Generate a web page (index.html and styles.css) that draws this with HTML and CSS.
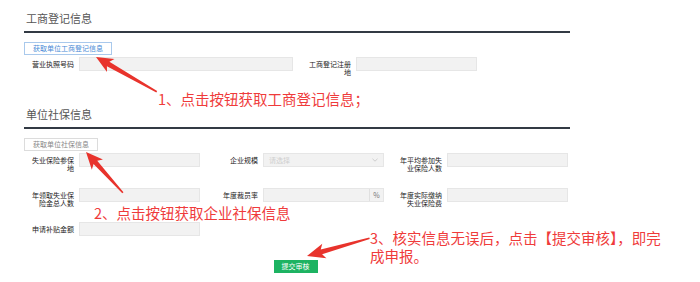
FILE: index.html
```html
<!DOCTYPE html>
<html lang="zh-CN">
<head>
    <meta charset="UTF-8">
    <meta name="viewport" content="width=device-width, initial-scale=1.0">
    <title>单位信息申报</title>
    <link rel="stylesheet" href="styles.css">
</head>
<body>

    <div class="page">
        <div class="section">
            <h2 class="section-title">工商登记信息</h2>
            <button class="fetch-btn fetch-btn-blue">获取单位工商登记信息</button>
            <div class="row-biz">
                <div class="field field-wide">
                    <label>营业执照号码</label>
                    <div class="input"></div>
                </div>
                <div class="field">
                    <label>工商登记注册地</label>
                    <div class="input"></div>
                </div>
            </div>
        </div>

        <div class="section section-social">
            <h2 class="section-title">单位社保信息</h2>
            <button class="fetch-btn">获取单位社保信息</button>
            <div class="form-grid">
                <div class="field">
                    <label>失业保险参保地</label>
                    <div class="input"></div>
                </div>
                <div class="field">
                    <label>企业规模</label>
                    <div class="input select">
                        <span class="placeholder">请选择</span>
                        <svg class="chevron" width="6" height="4" viewBox="0 0 6 4"><path d="M0.5 0.8 L3 3.2 L5.5 0.8" fill="none" stroke="#c4c4c4" stroke-width="0.8"/></svg>
                    </div>
                </div>
                <div class="field">
                    <label>年平均参加失业保险人数</label>
                    <div class="input"></div>
                </div>

                <div class="field">
                    <label>年领取失业保险金总人数</label>
                    <div class="input"></div>
                </div>
                <div class="field">
                    <label>年度裁员率</label>
                    <div class="input addon-input"><span class="addon">%</span></div>
                </div>
                <div class="field">
                    <label>年度实际缴纳失业保险费</label>
                    <div class="input"></div>
                </div>

                <div class="field">
                    <label>申请补贴金额</label>
                    <div class="input"></div>
                </div>
            </div>
        </div>

        <div class="submit-bar">
            <button class="submit-btn">提交审核</button>
        </div>
    </div>

    <!-- 标注 -->
    <p class="note note-1">1、点击按钮获取工商登记信息；</p>
    <p class="note note-2">2、点击按钮获取企业社保信息</p>
    <p class="note note-3">3、核实信息无误后，点击【提交审核】，即完成申报。</p>

    <svg class="arrows" width="700" height="282" viewBox="0 0 700 282">
        <g fill="#e8332c">
            <polygon transform="translate(96 57) rotate(29.8)" points="0,0 17,-7.5 14,-2.5 70,-0.8 70,0.8 14,2.5 17,7.5"/>
            <polygon transform="translate(86 152) rotate(47.9)" points="0,0 17,-7.5 14,-2.5 55,-0.8 55,0.8 14,2.5 17,7.5"/>
            <polygon transform="translate(307 256) rotate(-15.9)" points="0,0 18,-7.5 15,-2.5 65,-0.8 65,0.8 15,2.5 18,7.5"/>
        </g>
    </svg>

</body>
</html>
```

FILE: styles.css
```css
body {
    margin: 0;
    width: 700px;
    height: 282px;
    position: relative;
    overflow: hidden;
    background-color: #fff;
    font-family: "Noto Sans CJK SC", "Noto Sans", sans-serif;
}
.page {
    width: 546px;
    margin-left: 24px;
    padding-top: 10px;
}
.section-title {
    margin: 0;
    padding: 0 0 5px 2px;
    font-size: 11px;
    line-height: 16px;
    font-weight: normal;
    color: #555;
    border-bottom: 2px solid #323a44;
}
.section-social {
    margin-top: 30px;
}
.fetch-btn {
    display: block;
    margin-top: 9px;
    height: 13px;
    padding: 0 8px;
    font-family: inherit;
    font-size: 7px;
    line-height: 11px;
    color: #888;
    background-color: #fff;
    border: 1px solid #dcdcdc;
}
.fetch-btn-blue {
    color: #4a8bd6;
    border-color: #a9c9ec;
}
.row-biz {
    display: flex;
    gap: 13px;
    margin-top: 2px;
    padding-left: 5px;
}
.form-grid {
    display: grid;
    grid-template-columns: repeat(3, 171px);
    column-gap: 13px;
    row-gap: 15.5px;
    margin-top: 2px;
    padding-left: 5px;
}
.field {
    display: flex;
    align-items: flex-start;
    gap: 5px;
}
.field label {
    width: 45px;
    flex-shrink: 0;
    padding-top: 3px;
    font-size: 7px;
    line-height: 8px;
    text-align: right;
    color: #222;
}
.input {
    width: 121px;
    height: 14px;
    box-sizing: border-box;
    background-color: #f2f2f2;
    border: 1px solid #e6e6e6;
}
.field-wide .input {
    width: 214px;
}
.select {
    display: flex;
    align-items: center;
    justify-content: space-between;
    padding: 0 5px;
}
.placeholder {
    font-size: 7px;
    color: #cfcfcf;
}
.addon-input {
    display: flex;
    justify-content: flex-end;
}
.addon {
    width: 13px;
    border-left: 1px solid #e0e0e0;
    font-size: 7px;
    line-height: 12px;
    text-align: center;
    color: #777;
}
.submit-bar {
    display: flex;
    justify-content: center;
    margin-top: 24px;
    padding-right: 3px;
}
.submit-btn {
    height: 13px;
    padding: 0 8px;
    font-family: inherit;
    font-size: 7px;
    line-height: 13px;
    color: #fff;
    background-color: #1db362;
    border: none;
}
.note {
    position: absolute;
    margin: 0;
    font-size: 14.5px;
    line-height: 18px;
    color: #ef3b3b;
    white-space: nowrap;
}
.note-1 {
    left: 158px;
    top: 90px;
}
.note-2 {
    left: 94px;
    top: 204px;
}
.note-3 {
    left: 370px;
    top: 229px;
    width: 302px;
    white-space: normal;
}
.arrows {
    position: absolute;
    top: 0;
    left: 0;
    pointer-events: none;
}
```
